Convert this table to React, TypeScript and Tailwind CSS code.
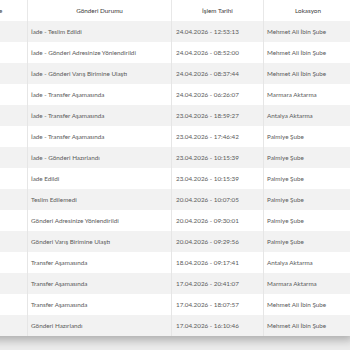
const ROWS: [string, string, string][] = [
  ['İade - Teslim Edildi', '24.04.2026 - 12:53:13', 'Mehmet Ali İbin Şube'],
  ['İade - Gönderi Adresinize Yönlendirildi', '24.04.2026 - 08:52:00', 'Mehmet Ali İbin Şube'],
  ['İade - Gönderi Varış Birimine Ulaştı', '24.04.2026 - 08:37:44', 'Mehmet Ali İbin Şube'],
  ['İade - Transfer Aşamasında', '24.04.2026 - 06:26:07', 'Marmara Aktarma'],
  ['İade - Transfer Aşamasında', '23.04.2026 - 18:59:27', 'Antalya Aktarma'],
  ['İade - Transfer Aşamasında', '23.04.2026 - 17:46:42', 'Palmiye Şube'],
  ['İade - Gönderi Hazırlandı', '23.04.2026 - 10:15:39', 'Palmiye Şube'],
  ['İade Edildi', '23.04.2026 - 10:15:39', 'Palmiye Şube'],
  ['Teslim Edilemedi', '20.04.2026 - 10:07:05', 'Palmiye Şube'],
  ['Gönderi Adresinize Yönlendirildi', '20.04.2026 - 09:30:01', 'Palmiye Şube'],
  ['Gönderi Varış Birimine Ulaştı', '20.04.2026 - 09:29:56', 'Palmiye Şube'],
  ['Transfer Aşamasında', '18.04.2026 - 09:17:41', 'Antalya Aktarma'],
  ['Transfer Aşamasında', '17.04.2026 - 20:41:07', 'Marmara Aktarma'],
  ['Transfer Aşamasında', '17.04.2026 - 18:07:57', 'Mehmet Ali İbin Şube'],
  ['Gönderi Hazırlandı', '17.04.2026 - 16:10:46', 'Mehmet Ali İbin Şube'],
];

const COLS = 'grid grid-cols-[64px_144px_92px_1fr]';

export default function App() {
  return (
    <div className="w-[350px] h-[350px] overflow-hidden bg-[#ececec] font-['Lato',sans-serif] text-[6.3px]">
      <div className="ml-[-36px] w-[390px] bg-white shadow-[0_5px_9px_-1px_rgba(0,0,0,0.28)]">
        <div className={`${COLS} h-[21px] items-stretch bg-white text-[#3a3a3a]`}>
          <div className="flex items-center justify-center border-r border-[#e8e8e8]">Şube</div>
          <div className="flex items-center justify-center border-r border-[#e8e8e8]">Gönderi Durumu</div>
          <div className="flex items-center justify-center border-r border-[#e8e8e8]">İşlem Tarihi</div>
          <div className="flex items-center justify-center pr-[2px]">Lokasyon</div>
        </div>
        {ROWS.map(([status, date, loc], i) => (
          <div
            key={i}
            className={`${COLS} h-[21px] text-[#5a5a5a] ${i % 2 === 0 ? 'bg-[#f2f2f2]' : 'bg-white'}`}
          >
            <div className="border-r border-[#e6e6e6]" />
            <div className="flex items-center pl-[3px] border-r border-[#e6e6e6] whitespace-nowrap">{status}</div>
            <div className="flex items-center pl-[4px] border-r border-[#e6e6e6] whitespace-nowrap">{date}</div>
            <div className="flex items-center pl-[3px] whitespace-nowrap">{loc}</div>
          </div>
        ))}
      </div>
    </div>
  );
}
